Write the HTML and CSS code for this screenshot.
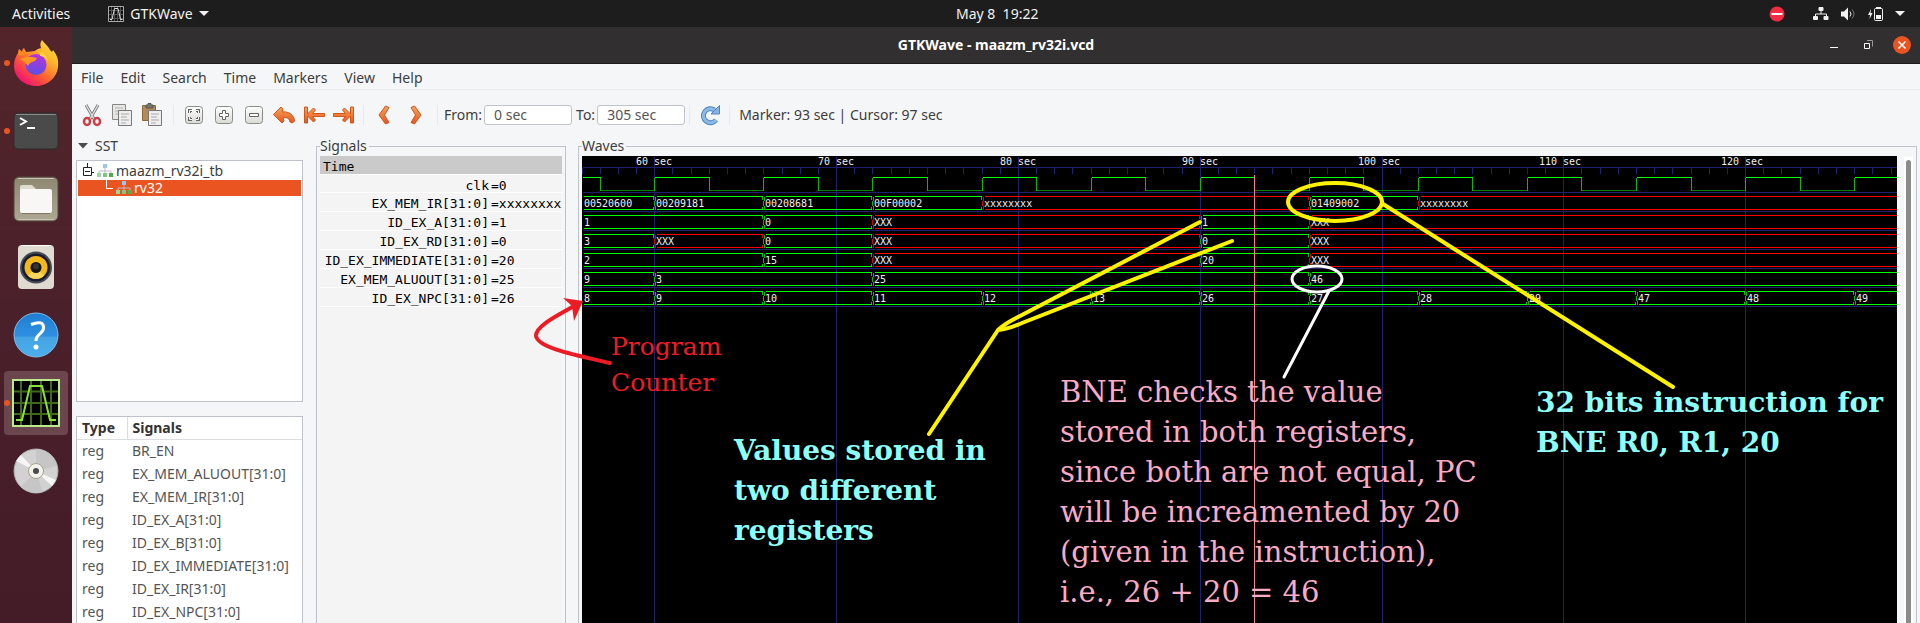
FILE: index.html
```html
<!DOCTYPE html>
<html lang="en">
<head>
<meta charset="utf-8">
<title>GTKWave - maazm_rv32i.vcd</title>
<link rel="stylesheet" href="styles.css">
</head>
<body>
<svg class="defs" width="0" height="0" aria-hidden="true">
  <defs>
    <linearGradient id="orange" x1="0" y1="0" x2="0" y2="1"><stop offset="0" stop-color="#f2a85c"/><stop offset="1" stop-color="#e8541c"/></linearGradient>
    <linearGradient id="key" x1="0" y1="0" x2="0" y2="1"><stop offset="0" stop-color="#ffffff"/><stop offset="1" stop-color="#d9d9d6"/></linearGradient>
    <linearGradient id="fox" x1="1" y1="0" x2="0.2" y2="1"><stop offset="0" stop-color="#fff44f"/><stop offset="0.35" stop-color="#ffb52a"/><stop offset="0.65" stop-color="#ff6030"/><stop offset="1" stop-color="#f0067e"/></linearGradient>
    <linearGradient id="globe" x1="0.5" y1="0" x2="0.4" y2="1"><stop offset="0" stop-color="#b833e1"/><stop offset="1" stop-color="#5b50e0"/></linearGradient>
    <linearGradient id="help" x1="0" y1="0" x2="0" y2="1"><stop offset="0" stop-color="#1e7fd2"/><stop offset="0.53" stop-color="#2f8fe0"/><stop offset="0.54" stop-color="#46a2e4"/><stop offset="1" stop-color="#4cb0ec"/></linearGradient>
    <linearGradient id="folder" x1="0" y1="0" x2="0" y2="1"><stop offset="0" stop-color="#8d8671"/><stop offset="1" stop-color="#aea793"/></linearGradient>
    <symbol id="tree-node" viewBox="0 0 16 14">
      <path d="M8 4v3M2 9V7h12v2M8 7v2" fill="none" stroke="#b9bdc4"/>
      <path d="M6 0h4v4H6z" fill="#9cc4ee"/><path d="M0 9h4v4H0z" fill="#9bd79a"/><path d="M6 9h4v4H6z" fill="#7cc97b"/><path d="M12 9h4v4h-4z" fill="#4fae4e"/>
    </symbol>
  </defs>
</svg>

<header class="topbar">
  <div class="topbar-left">
    <button class="plain" type="button">Activities</button>
    <button class="plain app-menu" type="button">
      <svg width="16" height="16" viewBox="0 0 16 16"><path d="M.5.5h15v15H.5z" fill="#111" stroke="#aaa"/><path d="M3.500 1v14M6.500 1v14M9.500 1v14M12.500 1v14M1 4.500h14M1 8.500h14M1 12.500h14" stroke="#555"/><path d="M2 13.500h2L6.500 2.500h3.500l2.500 11h2" fill="none" stroke="#ddd"/></svg>
      GTKWave
      <svg width="10" height="5" viewBox="0 0 10 5"><path d="M0 0h10L5 5z" fill="#f2f2f2"/></svg>
    </button>
  </div>
  <time class="clock">May 8&nbsp; 19:22</time>
  <div class="status">
    <svg class="dnd" width="16" height="16" viewBox="0 0 16 16"><circle cx="8" cy="8" r="7.500" fill="#f22c42"/><path d="M2.500 8h11" stroke="#fff" stroke-width="2"/></svg>
    <svg width="16" height="14" viewBox="0 0 16 14"><path d="M8 3v4M2.500 10V7h11v3" fill="none" stroke="#f2f2f2"/><rect x="5.500" width="5" height="4" rx="1" fill="#f2f2f2"/><rect x="0" y="9" width="5" height="4" rx="1" fill="#f2f2f2"/><rect x="10.500" y="9" width="5" height="4" rx="1" fill="#f2f2f2"/></svg>
    <svg width="15" height="14" viewBox="0 0 15 14"><path d="M0 4.500h3L7 .5v13L3 9.500H0z" fill="#f2f2f2"/><path d="M9 4.500q2 2.500 0 5" fill="none" stroke="#f2f2f2"/><path d="M11 2.500q4 4.500 0 9" fill="none" stroke="#777"/></svg>
    <svg width="15" height="16" viewBox="0 0 15 16"><path d="M3 3L0 9h2l-.5 4L4.500 7H2.500z" fill="#f2f2f2"/><rect x="6.500" y="2.500" width="8" height="12" rx="1" fill="none" stroke="#f2f2f2"/><path d="M8 1h5v1H8zM8 9h5v4H8z" fill="#f2f2f2"/></svg>
    <svg width="10" height="5" viewBox="0 0 10 5"><path d="M0 0h10L5 5z" fill="#f2f2f2"/></svg>
  </div>
</header>

<div class="desktop">
  <nav class="dock" aria-label="Dock">
    <button class="dock-item running" type="button" aria-label="Firefox">
      <svg width="46" height="48" viewBox="0 0 46 48"><path d="M28 9C27 6 27 4 29 1c3 4 6 6 8 10l2 2 1-2c4 5 6 10 5 17-1 10-10 19-22 19S1 38 1 27c0-6 2-10 4-13l1-4 3 3 2-4 2 4c4 0 6-1 9-1 3-3 5-2 6-3z" fill="url(#fox)"/><path d="M5 16l1-6 3 3 1-4 4 5c-3 2-5 3-9 2z" fill="#ff8a1f"/><circle cx="23" cy="25.500" r="10.500" fill="url(#globe)"/><path d="M7 20c6-3 14-2 17-1l-2 3c-5 1-6 3-7 5-2-3-5-5-8-7z" fill="#ff9722"/><path d="M24 12c6 1 10 4 11 10-3-4-6-5-8-5 1-2-1-4-3-5z" fill="#ffd23f"/></svg>
    </button>
    <button class="dock-item running" type="button" aria-label="Terminal">
      <svg width="46" height="38" viewBox="0 0 46 38"><rect x="1" y="1" width="44" height="36" rx="4" fill="#4a4a4a" stroke="#2c2c2c"/><path d="M3 2.500h40" stroke="#8a8a8a"/><path d="M7 6l6 3.500L7 13" fill="none" stroke="#fff" stroke-width="2"/><path d="M14 16h8" stroke="#fff" stroke-width="2"/></svg>
    </button>
    <button class="dock-item" type="button" aria-label="Files">
      <svg width="46" height="46" viewBox="0 0 46 46"><rect x="1" y="1" width="44" height="44" rx="5" fill="url(#folder)" stroke="#514a40"/><path d="M5 2.500h36M5 43.500h36" stroke="#c9c3b4"/><path d="M7 11q0-2 2-2h10l4 4h14v8H7z" fill="#dedacd"/><rect x="7" y="13" width="32" height="24" rx="2" fill="#f8f7f5"/><path d="M9 37.500h28" stroke="#7d7663"/></svg>
    </button>
    <button class="dock-item" type="button" aria-label="Rhythmbox">
      <svg width="38" height="46" viewBox="0 0 38 46"><rect x="1" y="1" width="36" height="44" rx="4" fill="#dfdbd0"/><path d="M4 1.500h30" stroke="#fff"/><circle cx="19" cy="23.500" r="16" fill="#454b58"/><circle cx="19" cy="23.500" r="14" fill="#191c2c"/><circle cx="19" cy="23.500" r="11.500" fill="#f2b81c"/><path d="M19 23.500l-8 8a11.500 11.500 0 0 0 16 0z" fill="#fbd65c"/><circle cx="19" cy="23.500" r="5.500" fill="#151515"/><circle cx="19" cy="22.500" r="3" fill="#333"/></svg>
    </button>
    <button class="dock-item" type="button" aria-label="Help">
      <svg width="46" height="46" viewBox="0 0 46 46"><circle cx="23" cy="23" r="22" fill="url(#help)" stroke="#7fbbe8"/><path d="M18 12.500q13-5 12.500 3.500c0 6-8 6-7.500 13" fill="none" stroke="#fff" stroke-width="3"/><circle cx="23" cy="35" r="2.500" fill="#fff"/></svg>
    </button>
    <button class="dock-item running current" type="button" aria-label="GTKWave">
      <svg width="48" height="48" viewBox="0 0 48 48"><path d="M1 1h46v46H1z" fill="#000" stroke="#b9ea8c" stroke-width="2"/><path d="M9 2v44M19 2v44M29 2v44M39 2v44M2 12.500h44M2 24h44M2 35h44" stroke="#41691d" stroke-width="2"/><path d="M4 41h6L18 7h12l8 34h6" fill="none" stroke="#8ae234" stroke-width="2"/></svg>
    </button>
    <button class="dock-item" type="button" aria-label="Disc">
      <svg width="46" height="46" viewBox="0 0 46 46"><circle cx="23" cy="23" r="22" fill="#d2d2d2" stroke="#aaa"/><path d="M23 23L23 1A22 22 0 0 1 44 18zM23 23L8 39A22 22 0 0 0 30 44z" fill="#c6c6c6"/><path d="M23 23L3 13l5-6zM23 23l20 9-4 6z" fill="#f6f6f6"/><circle cx="23" cy="23" r="7.500" fill="#f3f2ee" stroke="#aaa18c"/><circle cx="23" cy="23" r="3" fill="#4a4a4a"/></svg>
    </button>
  </nav>

  <main class="window">
    <div class="titlebar">
      <h1>GTKWave - maazm_rv32i.vcd</h1>
      <div class="window-buttons">
        <button type="button" aria-label="Minimize"><svg width="18" height="18" viewBox="0 0 18 18"><path d="M5 11.500h8" stroke="#fff"/></svg></button>
        <button type="button" aria-label="Restore"><svg width="18" height="18" viewBox="0 0 18 18"><path d="M5.500 7.500h5v5h-5z" fill="none" stroke="#fff"/><path d="M8 4.500h5.500v6" fill="none" stroke="#999"/></svg></button>
        <button type="button" aria-label="Close"><svg width="18" height="18" viewBox="0 0 18 18"><circle cx="9" cy="9" r="9" fill="#e95420"/><path d="M5.500 5.500l7 7M12.500 5.500l-7 7" stroke="#fff" stroke-width="1.500"/></svg></button>
      </div>
    </div>

    <nav class="menubar" aria-label="Menu">
      <button type="button">File</button><button type="button">Edit</button><button type="button">Search</button><button type="button">Time</button><button type="button">Markers</button><button type="button">View</button><button type="button">Help</button>
    </nav>

    <div class="toolbar">
      <button type="button" aria-label="Cut"><svg width="22" height="24" viewBox="0 0 22 24"><path d="M5 2l8 14M17 2L9 16" stroke="#777" stroke-width="3"/><path d="M5 2l8 14M17 2L9 16" stroke="#dcdcda" stroke-width="1.500"/><ellipse cx="6" cy="18.500" rx="3" ry="3.500" fill="none" stroke="#cf3e46" stroke-width="2.500"/><ellipse cx="16" cy="18.500" rx="3" ry="3.500" fill="none" stroke="#cf3e46" stroke-width="2.500"/></svg></button>
      <button type="button" aria-label="Copy"><svg width="22" height="24" viewBox="0 0 22 24"><path d="M1.500 1.500h13v15h-13z" fill="#e6e6e4" stroke="#888"/><path d="M4 5h8M4 8h6M4 11h3" stroke="#b5b5b5"/><path d="M7.500 7.500h13v15h-13z" fill="#eee" stroke="#777"/><path d="M10 11h8M10 14h6M10 17h8M10 20h5" stroke="#aaa"/></svg></button>
      <button type="button" aria-label="Paste"><svg width="22" height="24" viewBox="0 0 22 24"><path d="M1.500 2.500h13v15h-13z" fill="#b48c5c" stroke="#8c6636"/><path d="M5 2h2V.5h3V2h2v3H5z" fill="#777" stroke="#555"/><path d="M7.500 7.500h13v15h-13z" fill="#eee" stroke="#777"/><path d="M10 11h8M10 14h6M10 17h8M10 20h5" stroke="#aaa"/></svg></button>
      <hr>
      <button type="button" aria-label="Zoom fit"><svg width="22" height="24" viewBox="0 0 22 24"><rect x="2.500" y="3.500" width="17" height="17" rx="3" fill="url(#key)" stroke="#8b8b88"/><path d="M6.500 10V7.500H9M13 7.500h2.500V10M6.500 14v2.500H9M13 16.500h2.500V14" fill="none" stroke="#666" stroke-width="3"/><path d="M6.500 10V7.500H9M13 7.500h2.500V10M6.500 14v2.500H9M13 16.500h2.500V14" fill="none" stroke="#fff"/></svg></button>
      <button type="button" aria-label="Zoom in"><svg width="22" height="24" viewBox="0 0 22 24"><rect x="2.500" y="3.500" width="17" height="17" rx="3" fill="url(#key)" stroke="#8b8b88"/><path d="M9.500 7.500h3v3h3v3h-3v3h-3v-3h-3v-3h3z" fill="#fff" stroke="#666"/></svg></button>
      <button type="button" aria-label="Zoom out"><svg width="22" height="24" viewBox="0 0 22 24"><rect x="2.500" y="3.500" width="17" height="17" rx="3" fill="url(#key)" stroke="#8b8b88"/><path d="M6.500 10.500h9v3h-9z" fill="#fff" stroke="#666"/></svg></button>
      <button type="button" aria-label="Zoom undo"><svg width="22" height="24" viewBox="0 0 22 24"><path d="M.5 11.500L8 4l2 2-1 3c7-1 12 3 12.500 9l-2 2-2.500-1c-1-4-3-5-7-4l1 3-2 2z" fill="url(#orange)" stroke="#d0561e"/></svg></button>
      <button type="button" aria-label="To start"><svg width="22" height="24" viewBox="0 0 22 24"><path d="M1.500 4h3v7l6-6 2 2-3 3.500h12v3h-12l3 3.500-2 2-6-6v7h-3z" fill="url(#orange)" stroke="#d0561e"/></svg></button>
      <button type="button" aria-label="To end"><svg width="22" height="24" viewBox="0 0 22 24"><path d="M20.500 4h-3v7l-6-6-2 2 3 3.500H.5v3h12l-3 3.500 2 2 6-6v7h3z" fill="url(#orange)" stroke="#d0561e"/></svg></button>
      <hr>
      <button class="edge" type="button" aria-label="Previous edge"><svg width="22" height="24" viewBox="0 0 22 24"><path d="M12.500 3l3.500 1.500L11.500 12l4.500 7.500-3.500 1.500L6 12z" fill="url(#orange)" stroke="#d0561e"/></svg></button>
      <button class="edge" type="button" aria-label="Next edge"><svg width="22" height="24" viewBox="0 0 22 24"><path d="M9.500 3L6 4.500l4.500 7.500L6 19.500 9.500 21 16 12z" fill="url(#orange)" stroke="#d0561e"/></svg></button>
      <hr>
      <label for="from">From:</label><input id="from" type="text" value="0 sec">
      <label for="to">To:</label><input id="to" type="text" value="305 sec">
      <hr>
      <button type="button" aria-label="Reload"><svg width="22" height="24" viewBox="0 0 22 24"><path d="M15.500 7A7 7 0 1 0 17 17" fill="none" stroke="#4a87c6" stroke-width="5"/><path d="M12 11h8.500V2.500z" fill="#85b3e0" stroke="#4a87c6"/><path d="M15.500 7A7 7 0 1 0 17 17" fill="none" stroke="#8db9e4" stroke-width="3"/></svg></button>
      <hr>
      <output>Marker: 93 sec&nbsp;|&nbsp;Cursor: 97 sec</output>
    </div>

    <div class="panes">
      <section class="sst">
        <button class="sst-toggle" type="button"><svg width="10" height="6" viewBox="0 0 10 6"><path d="M0 0h10L5 5.500z" fill="#4a4a4a"/></svg>SST</button>
        <ul class="tree">
          <li><svg width="12" height="16" viewBox="0 0 12 16"><path d="M1.500 4.500h8v8h-8zM5.500 0v4M3 8.500h5M9.500 9.500H12" fill="none" stroke="#222"/></svg><svg width="16" height="14"><use href="#tree-node"/></svg><span>maazm_rv32i_tb</span></li>
          <li class="selected"><svg width="8" height="16" viewBox="0 0 8 16"><path d="M.5 0v8.500H7" fill="none" stroke="#fff"/></svg><svg width="16" height="14"><use href="#tree-node"/></svg><span>rv32</span></li>
        </ul>
        <div class="signal-list">
          <table>
            <thead><tr><th>Type</th><th>Signals</th></tr></thead>
            <tbody>
              <tr><td>reg</td><td>BR_EN</td></tr>
              <tr><td>reg</td><td>EX_MEM_ALUOUT[31:0]</td></tr>
              <tr><td>reg</td><td>EX_MEM_IR[31:0]</td></tr>
              <tr><td>reg</td><td>ID_EX_A[31:0]</td></tr>
              <tr><td>reg</td><td>ID_EX_B[31:0]</td></tr>
              <tr><td>reg</td><td>ID_EX_IMMEDIATE[31:0]</td></tr>
              <tr><td>reg</td><td>ID_EX_IR[31:0]</td></tr>
              <tr><td>reg</td><td>ID_EX_NPC[31:0]</td></tr>
            </tbody>
          </table>
        </div>
      </section>

      <section class="panel signals">
        <h2>Signals</h2>
        <div class="signal-values">
          <div class="time-head">Time</div>
          <dl>
            <div><dt>clk</dt><dd>=0</dd></div>
            <div><dt>EX_MEM_IR[31:0]</dt><dd>=xxxxxxxx</dd></div>
            <div><dt>ID_EX_A[31:0]</dt><dd>=1</dd></div>
            <div><dt>ID_EX_RD[31:0]</dt><dd>=0</dd></div>
            <div><dt>ID_EX_IMMEDIATE[31:0]</dt><dd>=20</dd></div>
            <div><dt>EX_MEM_ALUOUT[31:0]</dt><dd>=25</dd></div>
            <div><dt>ID_EX_NPC[31:0]</dt><dd>=26</dd></div>
          </dl>
        </div>
      </section>

      <section class="panel waves">
        <h2>Waves</h2>
        <div class="waves-body">
          <div class="canvas">
            <svg id="waves" class="wave-svg" role="img" aria-label="Waveforms"></svg>
            <svg class="marks" aria-hidden="true">
              <g fill="none" stroke="#fff200" stroke-width="4" stroke-linecap="round" stroke-linejoin="round">
                <ellipse cx="753" cy="46" rx="47" ry="19"/>
                <path d="M801 48L1091 231M618 66L438 160Q422 168 416 174L347 278M650 85L440 167Q424 174 416 174"/>
              </g>
              <g fill="none" stroke="#fff" stroke-width="3" stroke-linecap="round"><ellipse cx="735" cy="123" rx="25" ry="13"/><path d="M747 135L702 221"/></g>
              <path d="M28 207C-7 199-44 192-46 180C-47 170-22 158-8 150" fill="none" stroke="#ed1c24" stroke-width="4" stroke-linecap="round"/>
              <path d="M1 145L-19 142L-10 150L-8 165z" fill="#ed1c24"/>
            </svg>
            <p class="note note-pc">Program<br>Counter</p>
            <p class="note note-values">Values stored in<br>two different<br>registers</p>
            <p class="note note-bne">BNE checks the value<br>stored in both registers,<br>since both are not equal, PC<br>will be increamented by 20<br>(given in the instruction),<br>i.e., 26 + 20 = 46</p>
            <p class="note note-instr">32 bits instruction for<br>BNE R0, R1, 20</p>
          </div>
          <div class="scrollbar"><div class="thumb"></div></div>
        </div>
      </section>
    </div>
  </main>
</div>
<script src="waves.js"></script>
</body>
</html>
```

FILE: styles.css
```css
* { box-sizing: border-box; }

body {
  margin: 0;
  height: 100vh;
  display: flex;
  flex-direction: column;
  overflow: hidden;
  background: #f5f6f8;
  color: #3d3d3d;
  font: 14px/20px "Noto Sans", sans-serif;
}

button {
  margin: 0;
  padding: 0;
  border: 0;
  background: none;
  color: inherit;
  font: inherit;
}

svg { display: block; flex: none; }
.defs { position: absolute; }

/* top bar */
.topbar {
  flex: none;
  height: 27px;
  display: flex;
  align-items: center;
  background: #1d1d1d;
  color: #f2f2f2;
}
.topbar-left {
  flex: 0 0 calc(50% - 4px);
  display: flex;
  gap: 38px;
  padding-left: 12px;
}
.app-menu { display: flex; align-items: center; gap: 6px; }
.status {
  margin-left: auto;
  padding-right: 15px;
  display: flex;
  align-items: center;
  gap: 12px;
}
.dnd { margin-right: 16px; }

/* dock */
.desktop { flex: 1; min-height: 0; display: flex; }
.dock {
  flex: none;
  width: 72px;
  padding: 4px;
  display: flex;
  flex-direction: column;
  gap: 4px;
  background: linear-gradient(#53252b, #4a202a 50%, #431c28);
}
.dock-item {
  position: relative;
  flex: none;
  height: 64px;
  display: flex;
  align-items: center;
  justify-content: center;
  border-radius: 4px;
}
.dock-item.current { background: #6b464f; }
.dock-item.running::before {
  content: "";
  position: absolute;
  left: 0;
  top: 29px;
  width: 6px;
  height: 6px;
  border-radius: 50%;
  background: #e95420;
}

/* window frame */
.window { flex: 1; min-width: 0; display: flex; flex-direction: column; }
.titlebar {
  flex: none;
  height: 37px;
  position: relative;
  display: flex;
  align-items: center;
  justify-content: center;
  background: #322f30;
  border-bottom: 1px solid #1c1a1a;
  color: #fff;
}
.titlebar h1 { margin: 0; font-size: 14px; }
.window-buttons {
  position: absolute;
  right: 9px;
  display: flex;
  gap: 16px;
}

.menubar {
  flex: none;
  height: 26px;
  padding: 2px 9px 0;
  display: flex;
  align-items: center;
  gap: 17px;
  border-bottom: 1px solid #ebecee;
}

.toolbar {
  flex: none;
  height: 46px;
  padding: 4px 9px 0;
  display: flex;
  align-items: center;
}
.toolbar button { width: 30px; display: flex; }
.toolbar .edge { width: 32px; }
.toolbar hr {
  width: 1px;
  height: 20px;
  margin: 0 9px 0 0;
  border: 0;
  background: #e9eaec;
}
.toolbar hr:first-of-type { margin-left: 2px; }
.toolbar .edge + hr { margin-right: 6px; }
.toolbar label { margin-right: 2px; }
.toolbar input {
  width: 88px;
  height: 20px;
  margin-right: 4px;
  padding: 0 9px;
  border: 1px solid #c0c3ca;
  border-radius: 3px;
  background: #fff;
  color: #555;
  font: inherit;
}

/* panes */
.panes { flex: 1; min-height: 0; display: flex; padding: 0 3px 0 4px; }

.sst {
  flex: none;
  width: 227px;
  margin-right: 13px;
  display: flex;
  flex-direction: column;
}
.sst-toggle {
  height: 24px;
  padding: 0 0 4px 2px;
  display: flex;
  align-items: center;
  gap: 7px;
}
.tree {
  flex: none;
  height: 242px;
  margin: 0 0 14px;
  padding: 1px;
  list-style: none;
  background: #fff;
  border: 1px solid #bfc2cb;
}
.tree li {
  height: 18px;
  padding-left: 4px;
  display: flex;
  align-items: center;
  gap: 3px;
}
.tree .selected {
  height: 16px;
  padding-left: 28px;
  gap: 2px;
  background: #e95420;
  color: #fff;
}

.signal-list {
  flex: 1;
  min-height: 0;
  overflow: hidden;
  background: #fff;
  border: 1px solid #bfc2cb;
  border-bottom: 0;
}
table { width: 100%; border-collapse: collapse; color: #555; }
th, td { height: 23px; padding: 0 5px; line-height: 20px; text-align: left; }
th { height: 22px; border-bottom: 1px solid #dcdde0; color: #333; }
th:first-child { width: 50px; border-right: 1px solid #dcdde0; }

.panel {
  margin-top: 10px;
  padding: 0 3px;
  display: flex;
  flex-direction: column;
  border: 1px solid #bfc2cb;
  border-bottom: 0;
}
.panel h2 {
  align-self: flex-start;
  margin: -11px 0 0;
  padding-right: 2px;
  background: #f5f6f8;
  font-size: 14px;
  font-weight: normal;
}

.signals { flex: none; width: 250px; margin-right: 12px; }
.signal-values {
  flex: 1;
  overflow: hidden;
  background: #f4f4f4;
  color: #000;
  font: 13px/22px "DejaVu Sans Mono", monospace;
}
.time-head {
  height: 18px;
  padding-left: 3px;
  background: #cacaca;
}
.signal-values dl { margin: 0; border-top: 1px solid #fff; }
.signal-values dl div {
  height: 19px;
  display: grid;
  grid-template-columns: 169px 1fr;
  column-gap: 2px;
  border-bottom: 1px solid #fff;
}
.signal-values dl div:first-child { height: 18px; }
.signal-values dt { text-align: right; }
.signal-values dd { margin: 0; }

.waves { flex: 1; min-width: 0; }
.waves-body { flex: 1; min-height: 0; display: flex; }
.canvas { position: relative; flex: 1; min-width: 0; background: #000; }
.wave-svg { width: 100%; height: 100%; }
.wave-svg text { font: 10px "DejaVu Sans Mono", monospace; fill: #f0f0f0; }
.marks { position: absolute; inset: 0; width: 100%; height: 100%; overflow: visible; }
.scrollbar {
  flex: none;
  width: 9px;
  margin: 1px 0 0 7px;
  padding: 3px 2px 0;
  background: #fff;
}
.thumb { width: 5px; height: 100%; border-radius: 3px 3px 0 0; background: #8b8b8b; }

/* notes drawn over the waves */
.note {
  position: absolute;
  margin: 0;
  white-space: nowrap;
  font: 28px/40px "DejaVu Serif", serif;
}
.note-pc { left: 29px; top: 173px; font-size: 25px; line-height: 36px; color: #ed1c24; }
.note-values { left: 152px; top: 275px; font-weight: bold; color: #8cfffb; }
.note-bne { left: 478px; top: 216px; font-size: 29px; color: #f9aac5; }
.note-instr { left: 954px; top: 227px; font-weight: bold; color: #8cfffb; }
```

FILE: waves.js
```js
const svg = document.getElementById('waves');
const width = svg.clientWidth;
const height = svg.clientHeight;
const START = 56;
const END = Math.ceil(START + width / 18.18);
const at = t => Math.round(72.3 + 18.18 * (t - 60));

const buses = [
  [[56, '00520600'], [60, '00209181'], [66, '00208681'], [72, '00F00002'], [78, 'xxxxxxxx'], [96, '01409002'], [102, 'xxxxxxxx']],
  [[56, '1'], [66, '0'], [72, 'XXX'], [90, '1'], [96, 'XXX']],
  [[56, '3'], [60, 'XXX'], [66, '0'], [72, 'XXX'], [90, '0'], [96, 'XXX']],
  [[56, '2'], [66, '15'], [72, 'XXX'], [90, '20'], [96, 'XXX']],
  [[56, '9'], [60, '3'], [72, '25'], [96, '46']],
  [[56, '8'], [60, '9'], [66, '10'], [72, '11'], [78, '12'], [84, '13'], [90, '26'], [96, '27'], [102, '28'], [108, '29'], [114, '47'], [120, '48'], [126, '49']]
];

let out = '';
const line = (d, color) => {
  out += `<path d="${d}" transform="translate(.5 .5)" fill="none" stroke="${color}" shape-rendering="crispEdges"/>`;
};
const text = (x, y, s) => { out += `<text x="${x}" y="${y}">${s}</text>`; };

// ruler and grid
line(`M0 11H${width}`, '#202070');
for (let t = START; t <= END; t++) {
  if (t % 10 === 0) line(`M${at(t)} 0V${height}`, '#202070');
  else line(`M${Math.max(0, at(t))} 11V17`, '#202070');
}
for (let row = 0; row < 7; row++) line(`M0 ${36 + row * 19}H${width}`, '#202070');

// clock: high for three seconds, low for three
for (let t = 54; t < END; t += 6) {
  const rise = at(t), fall = at(t + 3), next = at(t + 6);
  line(`M${Math.max(0, rise)} 21H${Math.min(fall, width)}`, '#00ff00');
  line(`M${fall} 34H${next}`, '#008000');
  line(`M${fall} 21V34M${next} 21V34`, '#00c000');
}

// buses
buses.forEach((values, i) => {
  const top = 40 + i * 19, mid = top + 6, bottom = top + 13;
  values.forEach(([t, label], n) => {
    const unknown = /x/i.test(label);
    const first = n === 0, last = n === values.length - 1;
    const x0 = first ? 0 : at(t);
    const x1 = last ? width - 1 : at(values[n + 1][0]);
    const left = x0 + (first ? 1 : 2), right = last ? x1 : x1 - 1;
    const edge = unknown ? '#e00000' : '#00c000';
    if (!first) line(`M${left - 1} ${top}V${top + 4}M${x0} ${top + 4}V${bottom - 4}M${left - 1} ${bottom - 4}V${bottom}`, edge);
    if (!last) line(`M${right} ${top}V${top + 3}M${right} ${bottom - 3}V${bottom}`, edge);
    line(`M${left} ${top}H${right}M${left} ${bottom}H${right}`, unknown ? '#ff0000' : '#00ff00');
    text(x0 + 2, mid + 5, label);
  });
});

// time labels
for (let t = 60; t < END; t += 10) text(at(t) - (String(t).length + 1) * 6, 9, `${t} sec`);

// marker
line(`M${at(93)} 18V${height}`, '#ff8080');

svg.innerHTML = out;
```
